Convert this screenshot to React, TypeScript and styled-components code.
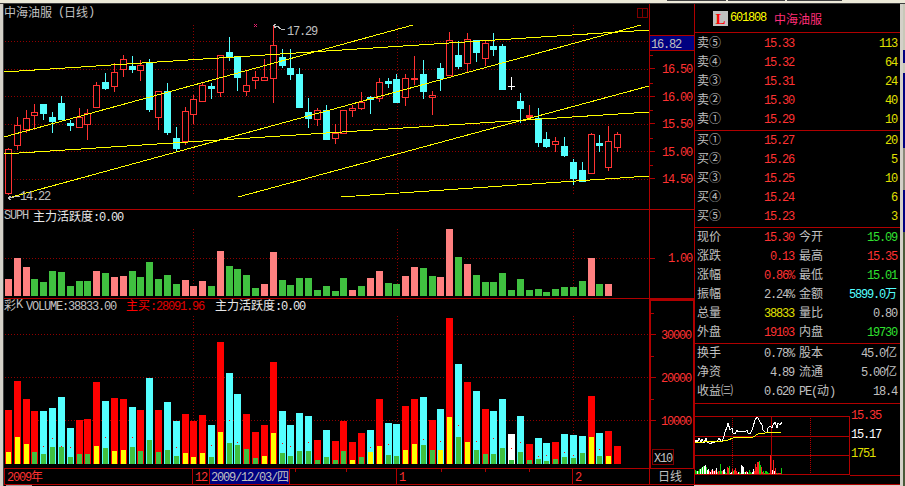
import React from "react";
import styled, { createGlobalStyle } from "styled-components";

const LINE = "#b00000";
const DOT = "#900000";
const RED = "#ff3232";
const CYAN = "#54ffff";
const GREEN = "#40c040";
const QUOTE_GREEN = "#30e030";
const YELLOW = "#e0e000";
const GREY = "#c0c0c0";

// every chart value below is read off a 3x crop, so it is in thirds of a pixel
const third = (v: number, base = 0) => Math.round(base + v / 3);
const barX = (i: number) => 5 + Math.round(i * 8.826);

type Candle = [number, number, number, number, string];
const candles: Candle[] = [
  [448, 578, 445, 585, "r"], [376, 436, 352, 450, "r"], [355, 388, 330, 400, "r"], [337, 344, 312, 390, "r"],
  [312, 339, 312, 360, "c"], [351, 363, 335, 399, "c"], [309, 357, 288, 360, "c"], [369, 375, 360, 393, "c"],
  [351, 381, 323, 384, "r"], [340, 371, 327, 420, "r"], [256, 320, 246, 321, "r"], [246, 264, 219, 270, "c"],
  [217, 257, 189, 276, "r"], [178, 206, 165, 231, "r"], [198, 207, 168, 219, "c"], [196, 209, 180, 243, "r"],
  [187, 327, 177, 336, "c"], [274, 350, 273, 390, "r"], [274, 396, 249, 405, "c"], [414, 444, 381, 456, "c"],
  [334, 422, 321, 435, "r"], [298, 341, 285, 372, "r"], [255, 302, 246, 303, "r"], [258, 264, 249, 297, "c"],
  [166, 275, 165, 291, "r"], [156, 168, 111, 183, "c"], [169, 231, 168, 273, "c"], [256, 272, 210, 288, "r"],
  [232, 239, 213, 267, "r"], [232, 239, 177, 240, "r"], [136, 233, 81, 309, "r"], [171, 195, 147, 204, "c"],
  [204, 221, 147, 240, "c"], [222, 321, 204, 324, "c"], [336, 353, 294, 384, "c"], [331, 356, 324, 378, "r"],
  [330, 417, 315, 420, "c"], [400, 413, 372, 432, "r"], [330, 398, 330, 400, "r"], [325, 331, 315, 351, "r"],
  [305, 323, 276, 330, "r"], [292, 297, 288, 342, "c"], [247, 295, 234, 306, "r"], [243, 248, 234, 264, "c"],
  [237, 306, 222, 306, "c"], [235, 290, 222, 318, "r"], [235, 238, 168, 255, "r"], [222, 273, 180, 297, "c"],
  [286, 292, 273, 345, "r"], [204, 234, 189, 273, "c"], [121, 225, 96, 226, "r"], [165, 198, 123, 207, "c"],
  [118, 188, 99, 216, "r"], [120, 156, 120, 186, "c"], [130, 173, 120, 198, "r"], [138, 147, 99, 168, "c"],
  [138, 267, 132, 270, "c"], [258, 260, 231, 270, "w"], [303, 324, 279, 369, "c"], [345, 351, 315, 352, "f"],
  [354, 426, 324, 441, "c"], [417, 438, 396, 444, "c"], [424, 433, 411, 456, "r"], [438, 465, 411, 471, "c"],
  [486, 534, 477, 555, "c"], [510, 543, 486, 546, "c"], [403, 518, 400, 519, "r"], [429, 435, 405, 456, "c"],
  [424, 500, 378, 513, "r"], [403, 440, 396, 456, "r"],
];

const trendLines = [
  [4, 72, 649, 30],
  [4, 137, 413, 25],
  [4, 154, 649, 112],
  [8, 198, 641, 25],
  [238, 197, 649, 86],
  [341, 197, 649, 176],
];

const activity = [
  222, 159, 186, 222, 231, 198, 201, 243, 228, 228, 198, 204, 216, 213, 198, 216, 171, 222, 210, 237,
  225, 243, 228, 243, 138, 183, 192, 210, 249, 237, 141, 225, 240, 219, 219, 255, 243, 258, 219, 255,
  243, 219, 198, 234, 237, 213, 186, 189, 213, 216, 72, 156, 177, 210, 231, 231, 204, 255, 222, 255,
  252, 261, 252, 246, 246, 228, 159, 237, 237,
];
const activityPink = new Set([0, 1, 2, 10, 12, 13, 20, 21, 22, 24, 29, 30, 39, 41, 42, 45, 46, 49, 50, 52, 66, 68]);

type Vol = [number, string, number, string, number?];
const volumes: Vol[] = [
  [210, "r", 336, "y"], [123, "r", 291, "y"], [177, "r", 312, "y"], [213, "r", 336, "g"],
  [213, "c", 342, "g", 319], [204, "c", 321, "g", 295], [171, "c", 321, "g", 319], [264, "c", 351, "g", 322],
  [240, "r", 342, "g"], [237, "r", 342, "g"], [126, "r", 318, "y"], [183, "c", 324, "g", 292],
  [174, "r", 333, "y"], [177, "r", 330, "y"], [201, "c", 321, "g", 292], [210, "r", 333, "g"],
  [114, "c", 300, "g"], [210, "r", 336, "g"], [186, "c", 330, "g"], [243, "c", 348, "g", 322],
  [222, "r", 339, "y"], [243, "r", 351, "y"], [225, "r", 339, "y"], [255, "c", 351, "g", 316],
  [6, "r", 276, "y"], [99, "c", 309, "g", 241], [162, "c", 315, "g", 307], [222, "r", 327, "g"],
  [276, "r", 354, "g"], [255, "r", 348, "y"], [66, "r", 279, "y"], [213, "c", 339, "g", 310],
  [255, "c", 348, "g", 319], [219, "c", 333, "g"], [228, "c", 333, "g", 307], [300, "r", 360, "g"],
  [270, "c", 351, "g"], [303, "r", 360, "g"], [243, "r", 333, "g"], [306, "r", 360, "y"],
  [279, "r", 351, "g"], [270, "c", 336, "y", 322], [177, "r", 318, "y"], [249, "c", 345, "g", 313],
  [252, "c", 348, "g"], [198, "r", 330, "y"], [177, "r", 312, "y"], [171, "c", 315, "g", 298],
  [240, "r", 330, "g"], [207, "c", 330, "y", 304], [-66, "r", 231, "y"], [72, "c", 291, "g", 256],
  [126, "r", 306, "y"], [153, "c", 330, "g", 304], [207, "r", 342, "g"], [213, "c", 342, "g", 295],
  [177, "c", 324, "g"], [282, "w", 360, "g", 325], [228, "c", 336, "g", 307], [312, "r", 360, "g"],
  [294, "c", 357, "g", 349], [309, "c", 363, "g", 346], [306, "r", 357, "g"], [282, "c", 351, "g", 337],
  [285, "c", 354, "g", 346], [288, "c", 339, "g"], [168, "r", 291, "y"], [279, "c", 348, "g", 328],
  [273, "r", 348, "y"], [318, "r", 372, "r"],
];
const volColor: Record<string, string> = { r: "#ff0000", c: CYAN, w: "#ffffff", y: "#ffff00", g: GREEN };

const priceTrail =
  "12,128 17,120 22,130 27,115 32,125 37,118 42,128 47,115 52,125 57,128 62,132 67,125 72,128 77,122 82,125 87,115 92,122 97,125 102,108 105,95 110,80 115,70 120,90 125,85 130,100 135,102 140,90 145,95 150,92 155,95 160,92 165,95 170,90 175,100 180,103 185,90 190,80 195,60 200,52 205,55 210,65 215,75 220,90 225,95 230,100 235,85 240,78 245,85 250,75 255,65 260,85 265,70 270,75 275,66";
const avgTrail = "12,130 40,125 100,124 115,119 130,115 150,112 190,110 205,102 225,98 272,97";
const toMini = (s: string) =>
  s
    .split(" ")
    .map((p) => {
      const [x, y] = p.split(",").map(Number);
      return `${third(x, 690)},${third(y, 400)}`;
    })
    .join(" ");

const miniBars =
  "g4 g3 w3 g3 g5 w5 g6 w7 g8 w8 w9 g7 w4 w5 r3 w2 r4 w5 r3 w3 r4 w6 r2 g3 r3 g10 g3 r3 w4 w5 g2 g1 r7 r6 g8 w1 w2 r5 g3 r4 r6 r3 r1 w2 g2 g1 w9 w8 w7 g2 w2 r3 w2 g1 g4 g2 g1 w2 w5 r3 r10 r7 r12 r12 g13 g9 r7 r2 g3 r1 g3 g3 g2 g1 r1 r19 r1 w4 r14 w3 r6 r1 g1 r1 r1 r1 g6"
    .split(" ")
    .map((b) => ({ kind: b[0], h: Number(b.slice(1)) }));
const miniColor: Record<string, string> = { r: "#ff2020", w: "#ffffff", g: "#10d010" };

const sells = [
  ["卖⑤", "15.33", "113"],
  ["卖④", "15.32", "64"],
  ["卖③", "15.31", "24"],
  ["卖②", "15.30", "40"],
  ["卖①", "15.29", "10"],
];
const buys = [
  ["买①", "15.27", "20"],
  ["买②", "15.26", "5"],
  ["买③", "15.25", "10"],
  ["买④", "15.24", "6"],
  ["买⑤", "15.23", "3"],
];

const GlobalStyle = createGlobalStyle`
  html, body {
    margin: 0;
    padding: 0;
    background: #d4d0c8;
  }
`;

const Root = styled.div`
  width: 905px;
  height: 486px;
  display: flex;
  flex-direction: column;
  overflow: hidden;
  background: #d4d0c8;
  color: ${GREY};
  font-family: "Noto Sans CJK SC", sans-serif;
  font-size: 12px;
`;

const TopEdge = styled.div`
  height: 3px;
  flex: none;
  display: flex;
  gap: 2px;
  padding-left: 667px;
  border-bottom: 1px solid #404040;
  background: #ece9d8;
`;

const TabStub = styled.div<{ $w: number }>`
  width: ${(p) => p.$w}px;
  height: 1px;
  background: #404040;
`;

const Body = styled.div`
  flex: 1;
  display: flex;
  min-height: 0;
`;

const LeftEdge = styled.div`
  width: 3px;
  flex: none;
  border-right: 1px solid #404040;
`;

const ChartColumn = styled.div`
  width: 690px;
  flex: none;
  display: flex;
  flex-direction: column;
  background: #000;
`;

const Pane = styled.div<{ $h: number }>`
  position: relative;
  height: ${(p) => p.$h}px;
  flex: none;
  display: flex;
  box-sizing: border-box;
  border-bottom: 1px solid ${LINE};
`;

const PaneTitle = styled.div<{ $top: number }>`
  position: absolute;
  top: ${(p) => p.$top}px;
  left: 0;
  display: flex;
  line-height: 14px;
  white-space: nowrap;
`;

const Plot = styled.svg`
  display: block;
  width: 645px;
  height: 100%;
  flex: none;
  shape-rendering: crispEdges;
`;

const Axis = styled.div<{ $thick?: boolean; $pad?: number }>`
  flex: 1;
  box-sizing: border-box;
  padding-top: ${(p) => p.$pad ?? 0}px;
  border-left: ${(p) => (p.$thick ? 2 : 1)}px solid ${LINE};
  border-top: ${(p) => (p.$thick ? `2px solid ${LINE}` : "none")};
  border-right: ${(p) => (p.$thick ? `1px solid ${LINE}` : "none")};
`;

const AxisRow = styled.div<{ $h: number; $minor?: boolean }>`
  height: ${(p) => p.$h}px;
  line-height: ${(p) => p.$h - 2}px;
  padding-right: 2px;
  text-align: right;
  color: ${RED};
  background:
    linear-gradient(${LINE}, ${LINE}) left center / 5px 1px no-repeat,
    ${(p) => (p.$minor ? `linear-gradient(${LINE}, ${LINE}) left top / 3px 1px no-repeat` : "none")};
`;

const LastPrice = styled.div`
  height: 14px;
  margin: 31px 0 4px;
  padding-left: 1px;
  line-height: 14px;
  background: #000080;
  border-top: 1px solid ${LINE};
  border-bottom: 1px solid ${LINE};
`;

const ScaleBox = styled.div`
  width: 19px;
  height: 14px;
  margin: 7px 0 0 1px;
  padding-left: 1px;
  line-height: 14px;
  border: 1px solid #800000;
`;

const Mono = styled.span<{ $c?: string }>`
  font-family: "Liberation Mono", monospace;
  font-size: 12px;
  letter-spacing: -1.2px;
  color: ${(p) => p.$c ?? "inherit"};
`;

const Han = styled.span<{ $c?: string }>`
  font-family: "Noto Sans CJK SC", sans-serif;
  font-size: 12px;
  color: ${(p) => p.$c ?? "inherit"};
`;

const TitleGroup = styled.span<{ $ml?: number }>`
  margin-left: ${(p) => p.$ml ?? 0}px;
`;

const ChartLabel = styled.text`
  font-family: "Liberation Mono", monospace;
  font-size: 12px;
  letter-spacing: -1.2px;
  fill: ${GREY};
  shape-rendering: auto;
`;

const TimeBar = styled.div`
  height: 16px;
  flex: none;
  display: flex;
  box-sizing: border-box;
  border-left: 1px solid ${LINE};
  border-bottom: 1px solid ${LINE};
  line-height: 13px;
`;

const tickBg = (ticks: number[]) =>
  ticks.map((x) => `linear-gradient(${LINE}, ${LINE}) ${x}px 0 / 1px 3px no-repeat`).join(", ");

const TimeCell = styled.div<{ $w: number; $blue?: boolean; $ticks?: number[] }>`
  width: ${(p) => p.$w}px;
  flex: none;
  box-sizing: border-box;
  padding-left: ${(p) => (p.$blue ? 1 : 2)}px;
  border-right: 1px solid ${LINE};
  white-space: nowrap;
  color: ${(p) => (p.$blue ? GREY : RED)};
  background: ${(p) => (p.$blue ? "#000080" : p.$ticks ? tickBg(p.$ticks) : "none")};
`;

const PeriodCell = styled.div`
  flex: 1;
  padding-right: 4px;
  text-align: center;
  color: ${GREY};
`;

const BottomEdge = styled.div`
  height: 1px;
  flex: none;
  background: linear-gradient(90deg, #000 2px, #a0a0a0 2px, #a0a0a0 28px, #000 28px);
`;

const Panel = styled.div`
  width: 206px;
  height: 481px;
  flex: none;
  box-sizing: border-box;
  display: flex;
  flex-direction: column;
  background: #000;
  border-left: 1px solid ${LINE};
  border-bottom: 1px solid ${LINE};
`;

const StockHeader = styled.div`
  height: 29px;
  flex: none;
  box-sizing: border-box;
  display: flex;
  align-items: center;
  padding-left: 18px;
  border-bottom: 1px solid ${LINE};
`;

const Logo = styled.div`
  width: 15px;
  height: 15px;
  margin-right: 2px;
  text-align: center;
  line-height: 17px;
  background: #c0c0c0;
  color: #ff0000;
  font-family: "Liberation Serif", serif;
  font-size: 15px;
  font-weight: 700;
`;

const StockName = styled.span`
  margin-left: 8px;
  color: #ff2d78;
  font-size: 12px;
`;

const Block = styled.div<{ $pt?: number; $pb: number }>`
  flex: none;
  padding-top: ${(p) => p.$pt ?? 0}px;
  padding-bottom: ${(p) => p.$pb}px;
  border-bottom: 1px solid ${LINE};
`;

const OrderRow = styled.div`
  height: 19px;
  box-sizing: border-box;
  display: grid;
  grid-template-columns: 28px 69px 1fr;
  padding: 0 3px 2px 2px;
  line-height: 15px;
`;

const StatRow = styled(OrderRow)`
  grid-template-columns: 28px 69px 33px 1fr;
`;

const Cell = styled.div<{ $c?: string; $right?: boolean; $ml?: number }>`
  color: ${(p) => p.$c ?? GREY};
  text-align: ${(p) => (p.$right ? "right" : "left")};
  margin-left: ${(p) => p.$ml ?? 0}px;
  white-space: nowrap;
`;

const Mini = styled.div`
  height: 80px;
  display: flex;
  align-items: flex-start;
`;

const MiniPlot = styled.svg`
  display: block;
  width: 155px;
  height: 80px;
  flex: none;
  shape-rendering: crispEdges;
`;

const MiniLabels = styled.div`
  flex: 1;
  height: 70px;
  padding: 1px 0 0 1px;
  border-bottom: 1px solid ${LINE};
`;

const MiniLabel = styled.div<{ $c: string }>`
  height: 19px;
  line-height: 18px;
  color: ${(p) => p.$c};
`;

const RightEdge = styled.div`
  width: 5px;
  flex: none;
  border-left: 3px solid #d4d0c8;
  box-sizing: border-box;
`;

const BehindStrip = styled.div`
  height: 100%;
  background: linear-gradient(
    180deg,
    #c8c8b8 46px,
    #000080 46px,
    #000080 59px,
    #c8c8b8 59px,
    #c8c8b8 69px,
    #000080 69px,
    #000080 144px,
    #8a8a7a 144px,
    #8a8a7a 186px,
    #000080 186px,
    #000080 228px,
    #4a5a3a 228px
  );
`;

const HLine = ({ y, x1 = 5, x2 = 648 }: { y: number; x1?: number; x2?: number }) => (
  <line x1={x1} x2={x2} y1={y + 0.5} y2={y + 0.5} stroke={DOT} strokeDasharray="1 2" />
);
const VLine = ({ x, y1, y2 }: { x: number; y1: number; y2: number }) => (
  <line x1={x + 0.5} x2={x + 0.5} y1={y1} y2={y2} stroke={DOT} strokeDasharray="1 2" />
);

const PricePlot = () => (
  <Plot viewBox="4 4 645 205">
    {[41, 69, 96, 124, 151, 179].map((y) => (
      <HLine key={y} y={y} />
    ))}
    {[193, 397, 573].map((x) => (
      <VLine key={x} x={x} y1={25} y2={194} />
    ))}
    {candles.map(([top, bottom, hi, lo, kind], i) => {
      const x = barX(i);
      const y1 = third(top);
      const y2 = Math.max(third(bottom), y1 + 1);
      const c = kind === "c" ? CYAN : kind === "w" ? "#ffffff" : RED;
      return (
        <g key={i}>
          <line x1={x + 3.5} x2={x + 3.5} y1={third(hi)} y2={third(lo)} stroke={c} />
          {kind === "r" ? (
            <rect x={x + 0.5} y={y1 + 0.5} width={6} height={y2 - y1} fill="#000" stroke={c} />
          ) : (
            <rect x={x} y={y1} width={7} height={y2 - y1 + (kind === "w" ? 0 : 1)} fill={c} />
          )}
        </g>
      );
    })}
    {trendLines.map(([x1, y1, x2, y2]) => (
      <line key={`${x1}-${y1}`} x1={x1} y1={y1} x2={x2} y2={y2} stroke="#ffff00" />
    ))}
    <rect x={637.5} y={8.5} width={10} height={9} fill="none" stroke="#800000" />
    <line x1={642.5} x2={642.5} y1={8} y2={18} stroke="#800000" />
    <path d="M254 24l3 3M257 24l-3 3" stroke="#e0206a" fill="none" />
    <path d="M277 26l-4 0 M273 26l3-2 M273 26l3 2 M277 26l4 3 4 1" stroke={GREY} fill="none" />
    <line x1={273.5} x2={273.5} y1={26} y2={40} stroke={RED} />
    <ChartLabel x={287} y={35}>17.29</ChartLabel>
    <path d="M8 198l12-2 M8 198l3-2 M8 198l3 2" stroke={GREY} fill="none" />
    <ChartLabel x={20} y={200}>14.22</ChartLabel>
  </Plot>
);

const ActivityPlot = () => (
  <Plot viewBox="4 210 645 88">
    <HLine y={258} />
    {[193, 397, 573].map((x) => (
      <VLine key={x} x={x} y1={229} y2={296} />
    ))}
    {activity.map((top, i) => {
      const y = third(top, 205);
      return <rect key={i} x={barX(i)} y={y} width={7} height={296 - y} fill={activityPink.has(i) ? "#ff8080" : GREEN} />;
    })}
  </Plot>
);

const VolumePlot = () => (
  <Plot viewBox="4 299 645 169">
    {[334, 377, 420].map((y) => (
      <HLine key={y} y={y} />
    ))}
    {[193, 397, 573].map((x) => (
      <VLine key={x} x={x} y1={316} y2={464} />
    ))}
    {volumes.map(([top, kind, innerTop, innerKind, dot], i) => {
      const x = barX(i);
      const y = third(top, 340);
      const iy = third(innerTop, 340);
      return (
        <g key={i}>
          <rect x={x} y={y} width={7} height={464 - y} fill={volColor[kind]} />
          <rect x={x + 1} y={iy} width={5} height={464 - iy} fill={volColor[innerKind]} />
          {dot !== undefined && <rect x={x + 3} y={third(dot, 340)} width={1} height={1} fill="#ff0000" />}
        </g>
      );
    })}
  </Plot>
);

const MiniChart = () => (
  <MiniPlot viewBox="695 404 155 80">
    {[416, 436, 455].map((y) => (
      <line key={y} x1={695} x2={850} y1={y + 0.5} y2={y + 0.5} stroke={LINE} />
    ))}
    <line x1={771.5} x2={771.5} y1={416} y2={474} stroke={LINE} />
    <line x1={849.5} x2={849.5} y1={416} y2={474} stroke={LINE} />
    {[732, 810].map((x) => (
      <line key={x} x1={x + 0.5} x2={x + 0.5} y1={416} y2={474} stroke={LINE} strokeDasharray="1 1" />
    ))}
    <polyline points={toMini(priceTrail)} fill="none" stroke="#ffffff" />
    <polyline points={toMini(avgTrail)} fill="none" stroke="#ffff00" />
    {miniBars.map((b, i) => (
      <rect key={i} x={695 + i} y={474 - b.h} width={1} height={b.h} fill={miniColor[b.kind]} />
    ))}
    <line x1={695} x2={850} y1={474.5} y2={474.5} stroke={LINE} />
  </MiniPlot>
);

const Order = ({ row }: { row: string[] }) => (
  <OrderRow>
    <Han>{row[0]}</Han>
    <Cell $c={RED} $right>
      <Mono>{row[1]}</Mono>
    </Cell>
    <Cell $c={YELLOW} $right>
      <Mono>{row[2]}</Mono>
    </Cell>
  </OrderRow>
);

const Stat = ({
  a,
  b,
  c,
  d,
  bc = GREY,
  dc = GREY,
  unit,
}: {
  a: React.ReactNode;
  b: string;
  c: React.ReactNode;
  d: string;
  bc?: string;
  dc?: string;
  unit?: string;
}) => (
  <StatRow>
    <Cell>{a}</Cell>
    <Cell $c={bc} $right>
      <Mono>{b}</Mono>
    </Cell>
    <Cell $ml={5}>{c}</Cell>
    <Cell $c={dc} $right>
      <Mono>{d}</Mono>
      {unit && <Han>{unit}</Han>}
    </Cell>
  </StatRow>
);

const App = () => (
  <>
    <GlobalStyle />
    <Root>
      <TopEdge>
        <TabStub $w={59} />
        <TabStub $w={57} />
        <TabStub $w={55} />
      </TopEdge>
      <Body>
        <LeftEdge />
        <ChartColumn>
          <Pane $h={206}>
            <PricePlot />
            <Axis>
              <LastPrice>
                <Mono>16.82</Mono>
              </LastPrice>
              {["16.50", "16.00", "15.50", "15.00", "14.50"].map((v) => (
                <AxisRow key={v} $h={27.5} $minor>
                  <Mono>{v}</Mono>
                </AxisRow>
              ))}
            </Axis>
            <PaneTitle $top={1}>
              <Han>中海油服</Han>
              <Mono>&nbsp;(</Mono>
              <Han>日线</Han>
              <Mono>)</Mono>
            </PaneTitle>
          </Pane>
          <Pane $h={89}>
            <ActivityPlot />
            <Axis $pad={38}>
              <AxisRow $h={20}>
                <Mono>1.00</Mono>
              </AxisRow>
            </Axis>
            <PaneTitle $top={-1}>
              <Mono>SUPH&nbsp;</Mono>
              <TitleGroup $ml={-1}>
                <Han $c="#e8e8e8">主力活跃度</Han>
                <Mono $c="#e8e8e8">:0.00</Mono>
              </TitleGroup>
            </PaneTitle>
          </Pane>
          <Pane $h={170}>
            <VolumePlot />
            <Axis $thick $pad={12}>
              {["30000", "20000", "10000"].map((v) => (
                <AxisRow key={v} $h={43} $minor>
                  <Mono>{v}</Mono>
                </AxisRow>
              ))}
              <ScaleBox>
                <Mono>X10</Mono>
              </ScaleBox>
            </Axis>
            <PaneTitle $top={-1}>
              <Han>彩</Han>
              <Mono>K</Mono>
              <TitleGroup $ml={4}>
                <Mono>VOLUME:38833.00</Mono>
              </TitleGroup>
              <TitleGroup $ml={10}>
                <Han $c="#ff0000">主买</Han>
                <Mono $c="#e00000">:28091.96</Mono>
              </TitleGroup>
              <TitleGroup $ml={11}>
                <Han $c="#e8e8e8">主力活跃度</Han>
                <Mono $c="#e8e8e8">:0.00</Mono>
              </TitleGroup>
            </PaneTitle>
          </Pane>
          <TimeBar>
            <TimeCell $w={188}>
              <Mono>2009</Mono>
              <Han>年</Han>
            </TimeCell>
            <TimeCell $w={17}>
              <Mono>12</Mono>
            </TimeCell>
            <TimeCell $w={80} $blue>
              <Mono>2009/12/03/</Mono>
              <Han>四</Han>
            </TimeCell>
            <TimeCell $w={107} $ticks={[5, 56]} />
            <TimeCell $w={176} $ticks={[44, 88, 132]}>
              <Mono>1</Mono>
            </TimeCell>
            <TimeCell $w={77}>
              <Mono>2</Mono>
            </TimeCell>
            <PeriodCell>日线</PeriodCell>
          </TimeBar>
          <BottomEdge />
        </ChartColumn>
        <Panel>
          <StockHeader>
            <Logo>L</Logo>
            <Mono $c="#ffff00">601808</Mono>
            <StockName>中海油服</StockName>
          </StockHeader>
          <Block $pt={1} $pb={1}>
            {sells.map((r) => (
              <Order key={r[0]} row={r} />
            ))}
          </Block>
          <Block $pb={1}>
            {buys.map((r) => (
              <Order key={r[0]} row={r} />
            ))}
          </Block>
          <Block $pb={1}>
            <Stat a="现价" b="15.30" bc={RED} c="今开" d="15.09" dc={QUOTE_GREEN} />
            <Stat a="涨跌" b="0.13" bc={RED} c="最高" d="15.35" dc={RED} />
            <Stat a="涨幅" b="0.86%" bc={RED} c="最低" d="15.01" dc={QUOTE_GREEN} />
            <Stat a="振幅" b="2.24%" c="金额" d="5899.0" dc={CYAN} unit="万" />
            <Stat a="总量" b="38833" bc={YELLOW} c="量比" d="0.80" />
            <Stat a="外盘" b="19103" bc={RED} c="内盘" d="19730" dc={QUOTE_GREEN} />
          </Block>
          <Block $pb={2}>
            <Stat a="换手" b="0.78%" c="股本" d="45.0" unit="亿" />
            <Stat a="净资" b="4.89" c="流通" d="5.00" unit="亿" />
            <Stat
              a="收益㈢"
              b="0.620"
              c={
                <>
                  <Mono>PE(</Mono>
                  <Han>动</Han>
                  <Mono>)</Mono>
                </>
              }
              d="18.4"
            />
          </Block>
          <Mini>
            <MiniChart />
            <MiniLabels>
              <MiniLabel $c={RED}>
                <Mono>15.35</Mono>
              </MiniLabel>
              <MiniLabel $c="#ffffff">
                <Mono>15.17</Mono>
              </MiniLabel>
              <MiniLabel $c={YELLOW}>
                <Mono>1751</Mono>
              </MiniLabel>
            </MiniLabels>
          </Mini>
        </Panel>
        <RightEdge>
          <BehindStrip />
        </RightEdge>
      </Body>
    </Root>
  </>
);

export default App;
